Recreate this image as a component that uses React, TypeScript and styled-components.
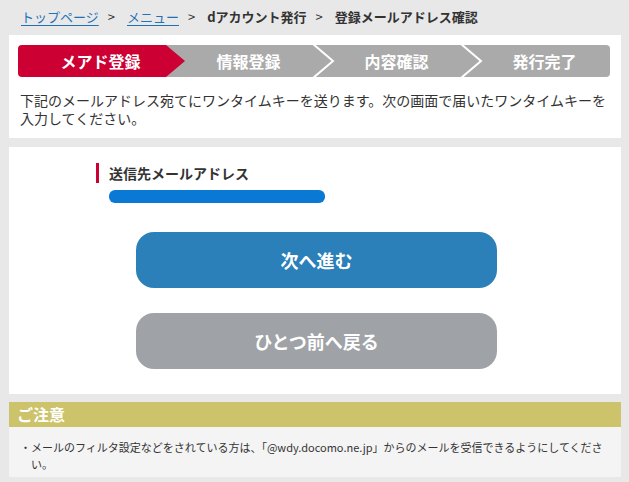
import React from "react";
import styled, { createGlobalStyle, css } from "styled-components";

const GlobalStyle = createGlobalStyle`
  html, body {
    margin: 0;
    padding: 0;
    background: #e8e8e8;
  }
  body {
    font-family: "Noto Sans CJK JP", "Noto Sans", sans-serif;
    color: #333333;
  }
  * { box-sizing: border-box; }
`;

const Page = styled.div`
  padding: 0 8px 5px 9px;
  min-height: 482px;
`;

const Breadcrumb = styled.nav`
  display: flex;
  align-items: center;
  height: 35px;
  padding: 0 0 1px 12px;
  font-size: 13px;
  line-height: 18px;
`;

const Crumb = styled.a`
  color: #1f72b8;
  text-decoration: underline;
  text-underline-offset: 3px;
`;

const Current = styled.span`
  color: #333333;
  font-weight: 700;
`;

const Sep = styled.span`
  margin: 0 12px 0 9px;
  color: #333333;
`;

const Panel = styled.section<{ $pad: string }>`
  background: #ffffff;
  padding: ${(p) => p.$pad};
`;

const StepBar = styled.ol`
  display: flex;
  height: 32px;
  margin: 0;
  padding: 0;
  list-style: none;
  border-radius: 4px;
  overflow: hidden;
`;

const Step = styled.li<{ $active?: boolean }>`
  position: relative;
  flex: 1;
  display: flex;
  align-items: center;
  justify-content: center;
  padding-left: 17px;
  background: ${(p) => (p.$active ? "#cc0033" : "#aaaaaa")};
  color: #ffffff;
  font-size: 16px;
  font-weight: 700;
  line-height: 32px;
`;

const Arrow = styled.svg`
  position: absolute;
  top: 0;
  left: 100%;
  z-index: 1;
  overflow: visible;
`;

const Lead = styled.p`
  margin: 14px 0 0 2px;
  font-size: 14px;
  line-height: 18px;
  color: #333333;
`;

const Field = styled.div`
  margin-left: 87px;
`;

const FieldLabel = styled.div`
  border-left: 3px solid #cc0033;
  padding-left: 10px;
  height: 20px;
  font-size: 14px;
  font-weight: 700;
  line-height: 20px;
  color: #333333;
`;

const EmailMask = styled.div`
  margin: 7px 0 0 13px;
  width: 216px;
  height: 13px;
  border-radius: 6px;
  background: #0a79d6;
`;

const Actions = styled.div`
  display: flex;
  flex-direction: column;
  align-items: center;
  gap: 25px;
  margin-top: 29px;
  padding-left: 3px;
`;

const Button = styled.button<{ $variant: "primary" | "secondary" }>`
  width: 361px;
  height: 56px;
  border: none;
  border-radius: 18px;
  color: #ffffff;
  font-family: inherit;
  font-size: 18px;
  font-weight: 700;
  cursor: pointer;
  ${(p) =>
    p.$variant === "primary"
      ? css`background: #2b80b9;`
      : css`background: #9fa3a7;`}
`;

const Notice = styled.section`
  margin-top: 8px;
`;

const NoticeHead = styled.h2`
  margin: 0;
  height: 25px;
  padding-left: 8px;
  background: #ccc36a;
  color: #ffffff;
  font-size: 16px;
  font-weight: 700;
  line-height: 25px;
`;

const NoticeBody = styled.ul`
  margin: 0;
  padding: 12px 6px 4px 22px;
  list-style: none;
  background: #f4f4f4;
`;

const NoticeItem = styled.li`
  position: relative;
  font-size: 11px;
  line-height: 17px;
  color: #333333;
  &::before {
    content: "・";
    position: absolute;
    left: -11px;
    top: 0;
  }
`;

const steps = ["メアド登録", "情報登録", "内容確認", "発行完了"];

export default function App() {
  return (
    <>
      <GlobalStyle />
      <Page>
        <Breadcrumb>
          <Crumb href="#">トップページ</Crumb>
          <Sep>&gt;</Sep>
          <Crumb href="#">メニュー</Crumb>
          <Sep>&gt;</Sep>
          <Current>dアカウント発行</Current>
          <Sep>&gt;</Sep>
          <Current>登録メールアドレス確認</Current>
        </Breadcrumb>

        <Panel $pad="10px 11px 11px 9px">
          <StepBar>
            {steps.map((s, i) => (
              <Step key={s} $active={i === 0}>
                {s}
                {i === 0 && (
                  <Arrow width="19" height="32" viewBox="0 0 19 32">
                    <polygon points="0,0 19,16 0,32" fill="#cc0033" />
                  </Arrow>
                )}
                {i > 0 && i < steps.length - 1 && (
                  <Arrow width="22" height="32" viewBox="0 0 22 32" style={{ marginLeft: -1 }}>
                    <polyline
                      points="0,-1 20,16 0,33"
                      fill="none"
                      stroke="#ffffff"
                      strokeWidth="2"
                    />
                  </Arrow>
                )}
              </Step>
            ))}
          </StepBar>
          <Lead>
            下記のメールアドレス宛てにワンタイムキーを送ります。次の画面で届いたワンタイムキーを入力してください。
          </Lead>
        </Panel>

        <Panel $pad="16px 0 25px 0" style={{ marginTop: 9 }}>
          <Field>
            <FieldLabel>送信先メールアドレス</FieldLabel>
            <EmailMask aria-label="メールアドレス" />
          </Field>
          <Actions>
            <Button $variant="primary">次へ進む</Button>
            <Button $variant="secondary">ひとつ前へ戻る</Button>
          </Actions>
        </Panel>

        <Notice>
          <NoticeHead>ご注意</NoticeHead>
          <NoticeBody>
            <NoticeItem>
              メールのフィルタ設定などをされている方は、「@wdy.docomo.ne.jp」からのメールを受信できるようにしてください。
            </NoticeItem>
          </NoticeBody>
        </Notice>
      </Page>
    </>
  );
}
